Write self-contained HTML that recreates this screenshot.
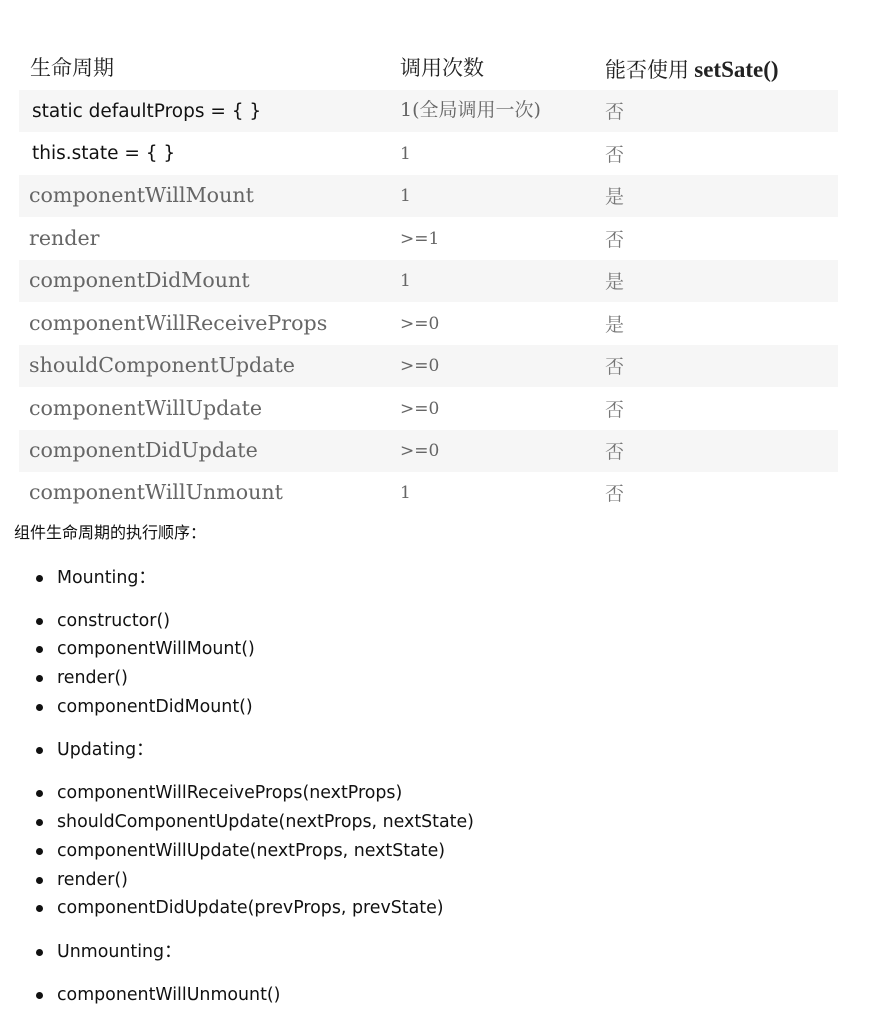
<!DOCTYPE html>
<html><head><meta charset="utf-8"><style>
body{margin:0;width:890px;height:1020px;background:#fff;position:relative;overflow:hidden;font-family:"DejaVu Sans","Noto Sans CJK SC",sans-serif;}
.t{position:absolute;white-space:nowrap;line-height:1}
.row{position:absolute;left:19px;width:819px;height:42px;background:#f6f6f6}
.c1{left:29px;font-family:"DejaVu Serif","Noto Serif CJK SC",serif;font-size:20.6px;color:#666}
.c2{left:400px;font-family:"DejaVu Serif","Noto Serif CJK SC",serif;font-size:17px;color:#666}
.c3{left:605px;font-family:"Noto Serif CJK SC",serif;font-size:19px;color:#777}
.b{left:32px;font-family:"DejaVu Sans","Noto Sans CJK SC",sans-serif;font-size:18.5px;color:#111}
.h{font-family:"Liberation Serif","Noto Serif CJK SC",serif;font-size:21px;color:#222}
.li{position:absolute;left:57px;font-size:17.4px;color:#111;white-space:nowrap;line-height:20px}
.li:before{content:"";position:absolute;left:-21px;top:7px;width:7px;height:7px;border-radius:50%;background:#111}
</style></head><body>
<div class="row" style="top:90px"></div>
<div class="row" style="top:175px"></div>
<div class="row" style="top:260px"></div>
<div class="row" style="top:345px"></div>
<div class="row" style="top:430px"></div>

<div class="t h" style="left:30px;top:58px">生命周期</div>
<div class="t h" style="left:400px;top:58px">调用次数</div>
<div class="t h" style="left:605px;top:58px">能否使用 <b style="font-size:23px">setSate()</b></div>

<div class="t c1 b" style="top:103px">static defaultProps = { }</div>
<div class="t c2" style="top:101px;font-size:19px">1(全局调用一次)</div><div class="t c3" style="top:101px">否</div>
<div class="t c1 b" style="top:145px">this.state = { }</div>
<div class="t c2" style="top:146px">1</div><div class="t c3" style="top:144px">否</div>
<div class="t c1" style="top:185px">componentWillMount</div>
<div class="t c2" style="top:188px">1</div><div class="t c3" style="top:186px">是</div>
<div class="t c1" style="top:228px">render</div>
<div class="t c2" style="top:231px">&gt;=1</div><div class="t c3" style="top:229px">否</div>
<div class="t c1" style="top:270px">componentDidMount</div>
<div class="t c2" style="top:273px">1</div><div class="t c3" style="top:271px">是</div>
<div class="t c1" style="top:313px">componentWillReceiveProps</div>
<div class="t c2" style="top:316px">&gt;=0</div><div class="t c3" style="top:314px">是</div>
<div class="t c1" style="top:355px">shouldComponentUpdate</div>
<div class="t c2" style="top:358px">&gt;=0</div><div class="t c3" style="top:356px">否</div>
<div class="t c1" style="top:398px">componentWillUpdate</div>
<div class="t c2" style="top:401px">&gt;=0</div><div class="t c3" style="top:399px">否</div>
<div class="t c1" style="top:440px">componentDidUpdate</div>
<div class="t c2" style="top:443px">&gt;=0</div><div class="t c3" style="top:441px">否</div>
<div class="t c1" style="top:482px">componentWillUnmount</div>
<div class="t c2" style="top:485px">1</div><div class="t c3" style="top:483px">否</div>

<div class="t" style="left:14px;top:525px;font-size:16px;color:#111">组件生命周期的执行顺序：</div>
<div class="li" style="top:568px">Mounting：</div>
<div class="li" style="top:611px">constructor()</div>
<div class="li" style="top:639px">componentWillMount()</div>
<div class="li" style="top:668px">render()</div>
<div class="li" style="top:697px">componentDidMount()</div>
<div class="li" style="top:740px">Updating：</div>
<div class="li" style="top:783px">componentWillReceiveProps(nextProps)</div>
<div class="li" style="top:812px">shouldComponentUpdate(nextProps, nextState)</div>
<div class="li" style="top:841px">componentWillUpdate(nextProps, nextState)</div>
<div class="li" style="top:870px">render()</div>
<div class="li" style="top:898px">componentDidUpdate(prevProps, prevState)</div>
<div class="li" style="top:942px">Unmounting：</div>
<div class="li" style="top:985px">componentWillUnmount()</div>
</body></html>
